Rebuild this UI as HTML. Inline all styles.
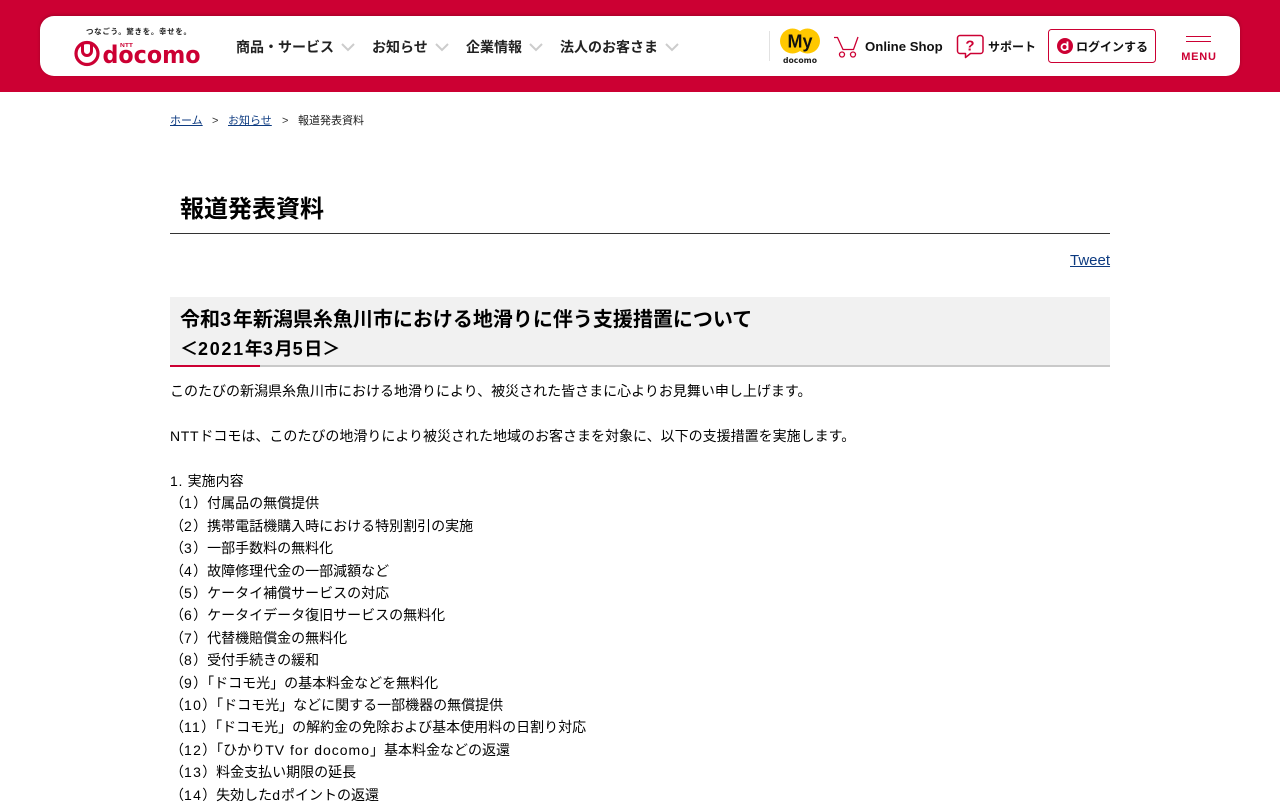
<!DOCTYPE html>
<html lang="ja">
<head>
<meta charset="utf-8">
<title>報道発表資料</title>
<style>
html,body{margin:0;padding:0;background:#fff;}
body{width:1280px;height:800px;overflow:hidden;position:relative;font-family:"Liberation Sans","Noto Sans CJK JP",sans-serif;color:#000;}
.a{position:absolute;white-space:nowrap;}
#hd{position:absolute;left:0;top:0;width:1280px;height:92px;background:#cc0033;}
#bar{position:absolute;left:40px;top:16px;width:1200px;height:60px;background:#fff;border-radius:14px;box-shadow:0 -1px 3px rgba(90,0,20,.35);}
.nav{font-size:14px;font-weight:700;line-height:20px;top:37px;color:#222;}
a{color:#0c3a80;text-decoration:underline;}
#body{position:absolute;left:170px;top:380.3px;width:940px;font-size:14px;line-height:22.4px;white-space:nowrap;color:#000;}
.n{letter-spacing:1.3px;}
.l{letter-spacing:1px;}
.t{letter-spacing:.7px;}
.h{letter-spacing:1.7px;}
</style>
</head>
<body>
<div id="hd"></div>
<div id="bar"></div>

<svg class="a" style="left:0;top:0" width="1280" height="92" viewBox="0 0 1280 92">
  <!-- docomo logo mark -->
  <circle cx="87" cy="53.500" r="11" fill="none" stroke="#cc0033" stroke-width="3.200"/>
  <path d="M82.500 44.500v6.500a4.500 4.500 0 0 0 9 0v-6.500" fill="none" stroke="#cc0033" stroke-width="3"/>
  <text x="102.500" y="63" font-family="'DejaVu Sans',sans-serif" font-weight="700" font-size="24" fill="#cc0033" textLength="98" lengthAdjust="spacingAndGlyphs">docomo</text>
  <text x="120" y="47" font-family="'Liberation Sans',sans-serif" font-weight="700" font-size="5.500" fill="#cc0033" textLength="13" lengthAdjust="spacingAndGlyphs">NTT</text>
  <text x="86" y="34" font-family="'Noto Sans CJK JP',sans-serif" font-weight="700" font-size="7.500" fill="#222" textLength="105">つなごう。驚きを。幸せを。</text>

  <!-- nav chevrons -->
  <g fill="none" stroke="#cccccc" stroke-width="2">
    <path d="M342 44l6 6 6-6"/>
    <path d="M436 44l6 6 6-6"/>
    <path d="M530 44l6 6 6-6"/>
    <path d="M666 44l6 6 6-6"/>
  </g>

  <!-- divider -->
  <rect x="769" y="31" width="1" height="30" fill="#e2e2e2"/>

  <!-- My docomo -->
  <circle cx="792.500" cy="41" r="12.500" fill="#ffc800"/>
  <circle cx="807.500" cy="41" r="12.500" fill="#ffc800"/>
  <text x="800" y="47.500" text-anchor="middle" font-family="'Liberation Sans',sans-serif" font-weight="700" font-size="18" fill="#111">My</text>
  <text x="800" y="63" text-anchor="middle" font-family="'DejaVu Sans',sans-serif" font-weight="700" font-size="7.500" fill="#222" textLength="34" lengthAdjust="spacingAndGlyphs">docomo</text>

  <!-- cart -->
  <g fill="none" stroke="#cc0033" stroke-width="1.300">
    <path d="M834 37.500h3.500l5.500 12h10.500l4.500-12.500"/>
    <circle cx="842" cy="54.500" r="2.500"/>
    <circle cx="853" cy="54.500" r="2.500"/>
  </g>

  <!-- support bubble -->
  <path d="M960 35.500h20.500a2.500 2.500 0 0 1 2.500 2.500v13a2.500 2.500 0 0 1-2.500 2.500h-10l-5 4v-4h-5.500a2.500 2.500 0 0 1-2.500-2.500v-13a2.500 2.500 0 0 1 2.500-2.500z" fill="none" stroke="#cc0033" stroke-width="1.500" stroke-linejoin="round"/>
  <text x="970" y="50.500" text-anchor="middle" font-family="'Liberation Sans',sans-serif" font-weight="700" font-size="15" fill="#cc0033">?</text>

  <!-- login button -->
  <rect x="1048.500" y="29.500" width="107" height="33" rx="3" fill="#fff" stroke="#cc0033" stroke-width="1"/>
  <circle cx="1065" cy="46" r="8" fill="#cc0033"/>
  <circle cx="1064.500" cy="47" r="3" fill="none" stroke="#fff" stroke-width="1.800"/>
  <path d="M1067.500 41.500v8.500" stroke="#fff" stroke-width="1.800" fill="none"/>

  <!-- menu -->
  <rect x="1186" y="36" width="25" height="1" fill="#cc0033"/>
  <rect x="1186" y="41" width="25" height="1" fill="#cc0033"/>
  <text x="1199" y="60" text-anchor="middle" font-family="'Liberation Sans',sans-serif" font-weight="700" font-size="11" letter-spacing=".8" fill="#cc0033">MENU</text>
</svg>

<div class="a nav" style="left:236px">商品・サービス</div>
<div class="a nav" style="left:372px">お知らせ</div>
<div class="a nav" style="left:466px">企業情報</div>
<div class="a nav" style="left:560px">法人のお客さま</div>
<div class="a" style="left:865px;top:37px;font-size:13.200px;font-weight:700;line-height:20px;color:#111">Online Shop</div>
<div class="a" style="left:988px;top:37px;font-size:12px;font-weight:700;line-height:20px;color:#111">サポート</div>
<div class="a" style="left:1076px;top:37px;font-size:12px;font-weight:700;line-height:20px;color:#111">ログインする</div>

<div class="a" style="left:170px;top:113px;font-size:11px;line-height:16px;"><a href="#">ホーム</a></div>
<div class="a" style="left:212px;top:113px;font-size:11px;line-height:16px;color:#333">&gt;</div>
<div class="a" style="left:228px;top:113px;font-size:11px;line-height:16px;"><a href="#">お知らせ</a></div>
<div class="a" style="left:282px;top:113px;font-size:11px;line-height:16px;color:#333">&gt;</div>
<div class="a" style="left:298px;top:113px;font-size:11px;line-height:16px;color:#222">報道発表資料</div>

<div class="a" style="left:180px;top:194px;font-size:24px;font-weight:700;line-height:32px;">報道発表資料</div>
<div class="a" style="left:170px;top:233px;width:940px;height:1px;background:#333"></div>

<div class="a" style="left:1070px;top:251px;font-size:15px;line-height:20px;"><a href="#">Tweet</a></div>

<div class="a" style="left:170px;top:297px;width:940px;height:68px;background:#f1f1f1"></div>
<div class="a" style="left:170px;top:365px;width:940px;height:2px;background:#c9c9c9"></div>
<div class="a" style="left:170px;top:365px;width:90px;height:2px;background:#cc0033"></div>
<div class="a" style="left:180px;top:306px;font-size:20px;font-weight:700;line-height:29px;color:#000">令和<span class="h">3</span>年新潟県糸魚川市における地滑りに伴う支援措置について</div>
<div class="a" style="left:180px;top:335px;font-size:18px;font-weight:700;line-height:29px;color:#000">＜<span class="h">2021</span>年<span class="h">3</span>月<span class="h">5</span>日＞</div>

<div id="body">このたびの新潟県糸魚川市における地滑りにより、被災された皆さまに心よりお見舞い申し上げます。<br>
<br>
<span class="t">NTT</span>ドコモは、このたびの地滑りにより被災された地域のお客さまを対象に、以下の支援措置を実施します。<br>
<br>
<span class="t">1. </span>実施内容<br>
（<span class="n">1</span>）付属品の無償提供<br>
（<span class="n">2</span>）携帯電話機購入時における特別割引の実施<br>
（<span class="n">3</span>）一部手数料の無料化<br>
（<span class="n">4</span>）故障修理代金の一部減額など<br>
（<span class="n">5</span>）ケータイ補償サービスの対応<br>
（<span class="n">6</span>）ケータイデータ復旧サービスの無料化<br>
（<span class="n">7</span>）代替機賠償金の無料化<br>
（<span class="n">8</span>）受付手続きの緩和<br>
（<span class="n">9</span>）「ドコモ光」の基本料金などを無料化<br>
（<span class="n">10</span>）「ドコモ光」などに関する一部機器の無償提供<br>
（<span class="n">11</span>）「ドコモ光」の解約金の免除および基本使用料の日割り対応<br>
（<span class="n">12</span>）「ひかり<span class="l">TV for docomo</span>」基本料金などの返還<br>
（<span class="n">13</span>）料金支払い期限の延長<br>
（<span class="n">14</span>）失効した<span class="l">d</span>ポイントの返還</div>
</body>
</html>
